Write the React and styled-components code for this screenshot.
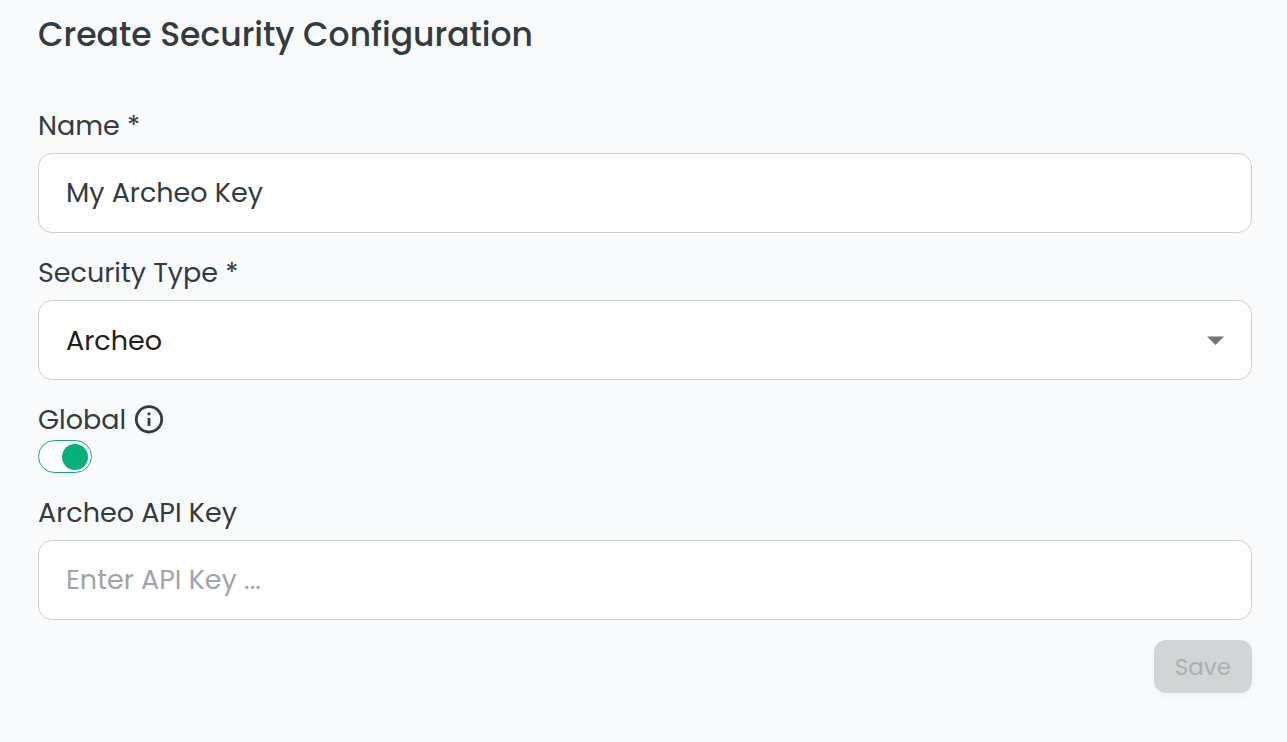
import React, { useState } from "react";
import styled, { createGlobalStyle } from "styled-components";

const GlobalStyle = createGlobalStyle`
  *, *::before, *::after { box-sizing: border-box; }
  body {
    margin: 0;
    background: #f9fafc;
    color: #343b3e;
    font-family: Poppins, Inter, sans-serif;
    font-size: 27px;
    font-weight: 400;
  }
  input, select, button { font: inherit; }
`;

const Form = styled.form`
  display: flex;
  flex-direction: column;
  gap: 20px;
  padding: 10px 35px 48px 38px;
`;

const Title = styled.h1`
  margin: 0 0 26px;
  font-size: 33px;
  line-height: 50px;
  font-weight: 500;
`;

const Field = styled.div`
  display: flex;
  flex-direction: column;
  gap: ${(p) => (p.$tight ? 0 : 7)}px;
`;

const Label = styled.label`
  line-height: 40px;
`;

const LabelRow = styled.div`
  display: flex;
  align-items: center;
  gap: 8px;
`;

const TextInput = styled.input`
  width: 100%;
  height: 80px;
  padding: 0 27px;
  border: 1px solid #cccfd0;
  border-radius: 14px;
  background: #fff;
  color: #343b3e;
  outline: none;

  &::placeholder { color: #a2a3ac; opacity: 1; }
  &:focus-visible { border-color: #05b07a; }
`;

const SelectWrap = styled.div`
  position: relative;
`;

const Select = styled.select`
  display: block;
  appearance: none;
  width: 100%;
  height: 80px;
  padding: 0 64px 0 27px;
  border: 1px solid #cccfd0;
  border-radius: 14px;
  background: #fff;
  color: #1f2022;
  outline: none;

  &:focus-visible { border-color: #05b07a; }
`;

const Caret = styled.svg`
  position: absolute;
  right: 28px;
  top: 36px;
  width: 17px;
  height: 9px;
  pointer-events: none;
`;

const InfoIcon = styled.svg`
  width: 30px;
  height: 30px;
`;

const Switch = styled.input`
  appearance: none;
  display: flex;
  align-items: center;
  width: 54px;
  height: 33px;
  margin: 0;
  padding: 0 3px;
  border: 1px solid #19a67a;
  border-radius: 17px;
  background: #fff;
  cursor: pointer;

  &::before {
    content: "";
    width: 26px;
    height: 26px;
    border-radius: 50%;
    background: #05b07a;
  }
  &:checked { justify-content: flex-end; }
`;

const SaveButton = styled.button`
  align-self: flex-end;
  height: 53px;
  padding: 0 21px;
  border: 0;
  border-radius: 12px;
  background: #d2d5d6;
  color: #adafb0;
  font-size: 23px;
  box-shadow: 0 3px 6px rgba(50, 56, 59, 0.04);
`;

export default function App() {
  const [name, setName] = useState("My Archeo Key");
  const [apiKey, setApiKey] = useState("");
  const [global, setGlobal] = useState(true);

  return (
    <>
      <GlobalStyle />
      <Form onSubmit={(e) => e.preventDefault()}>
        <Title>Create Security Configuration</Title>
        <Field>
          <Label htmlFor="name">Name *</Label>
          <TextInput id="name" value={name} onChange={(e) => setName(e.target.value)} />
        </Field>
        <Field>
          <Label htmlFor="type">Security Type *</Label>
          <SelectWrap>
            <Select id="type" defaultValue="archeo">
              <option value="archeo">Archeo</option>
            </Select>
            <Caret viewBox="0 0 17 9" aria-hidden="true">
              <path d="M0 .5h17L8.5 9z" fill="#757575" />
            </Caret>
          </SelectWrap>
        </Field>
        <Field $tight>
          <LabelRow>
            <Label htmlFor="global">Global</Label>
            <InfoIcon viewBox="0 0 30 30" aria-hidden="true">
              <circle cx="15" cy="14.3" r="12.7" fill="none" stroke="#343b3e" strokeWidth="2.8" />
              <path d="M13.6 7.5h2.8v2.8h-2.8zM13.6 13h2.8v8h-2.8z" fill="#343b3e" />
            </InfoIcon>
          </LabelRow>
          <Switch
            id="global"
            type="checkbox"
            role="switch"
            checked={global}
            onChange={(e) => setGlobal(e.target.checked)}
          />
        </Field>
        <Field>
          <Label htmlFor="api-key">Archeo API Key</Label>
          <TextInput
            id="api-key"
            placeholder="Enter API Key ..."
            value={apiKey}
            onChange={(e) => setApiKey(e.target.value)}
          />
        </Field>
        <SaveButton type="submit" disabled>Save</SaveButton>
      </Form>
    </>
  );
}
